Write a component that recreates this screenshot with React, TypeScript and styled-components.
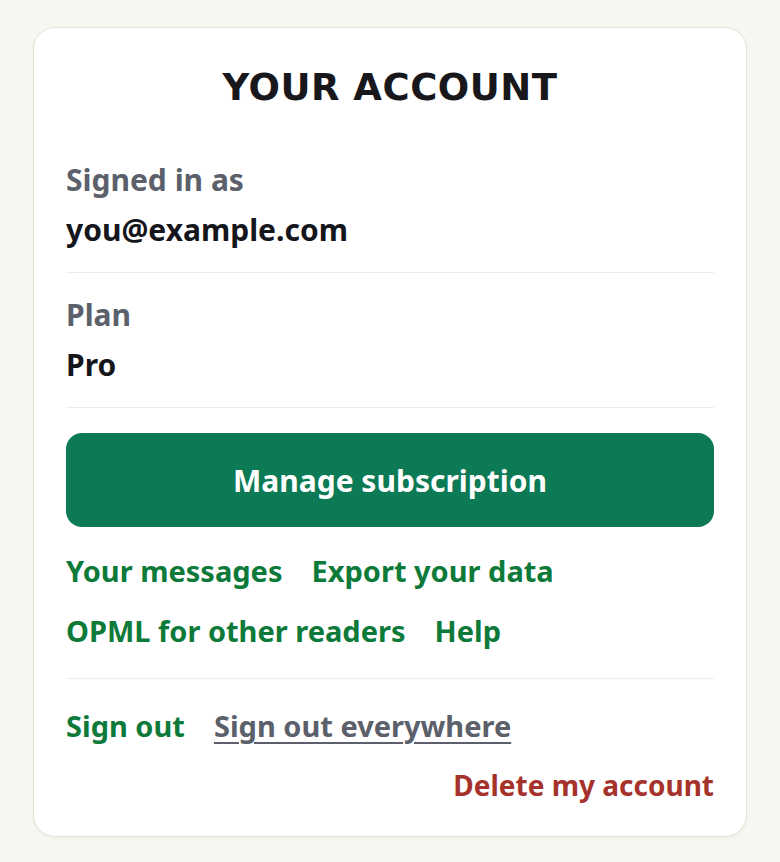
import React from "react";
import styled, { createGlobalStyle } from "styled-components";

const Global = createGlobalStyle`
  html, body { margin: 0; padding: 0; background: #f7f7f2; }
  body { font-family: "Noto Sans", "Open Sans", sans-serif; }
  * { box-sizing: border-box; }
`;

const Page = styled.div`
  padding: 27px 33px 26px;
`;

const Card = styled.section`
  background: #ffffff;
  border: 1.5px solid #e7e3d8;
  border-radius: 22px;
  box-shadow: 0 1px 3px rgba(60, 50, 20, 0.06);
  padding: 38px 32px 31px;
  display: flex;
  flex-direction: column;
`;

const Title = styled.h1`
  margin: 0 0 50px;
  font-family: "DejaVu Sans", "Liberation Sans", sans-serif;
  font-weight: 700;
  font-size: 37px;
  line-height: 44px;
  letter-spacing: 0.5px;
  text-align: center;
  color: #17171c;
`;

const Field = styled.div<{ $first?: boolean }>`
  display: flex;
  flex-direction: column;
  gap: 10px;
  padding: ${(p) => (p.$first ? "0" : "22px")} 0 22px;
  border-bottom: 1.5px solid #efede7;
`;

const Label = styled.div`
  font-size: 30px;
  line-height: 40px;
  font-weight: 700;
  color: #5b606b;
`;

const Value = styled.div`
  font-size: 30px;
  line-height: 40px;
  font-weight: 700;
  color: #15161c;
`;

const PrimaryButton = styled.button`
  margin-top: 25px;
  height: 94px;
  width: 100%;
  border: none;
  border-radius: 16px;
  background: #0c7a55;
  color: #ffffff;
  font-family: "Noto Sans", sans-serif;
  font-size: 30px;
  font-weight: 700;
  cursor: pointer;
`;

const LinkRow = styled.div<{ $top: number }>`
  display: flex;
  flex-wrap: wrap;
  gap: 29px;
  margin-top: ${(p) => p.$top}px;
`;

const Links = styled.div`
  display: flex;
  flex-direction: column;
  gap: 20px;
  margin-top: 24px;
  padding-bottom: 27px;
  border-bottom: 1.5px solid #efede7;
`;

const Link = styled.a<{ $tone?: "green" | "gray" | "red"; $size?: number }>`
  font-size: ${(p) => p.$size ?? 29}px;
  line-height: 40px;
  font-weight: 700;
  cursor: pointer;
  color: ${(p) =>
    p.$tone === "gray" ? "#5b606b" : p.$tone === "red" ? "#a6322c" : "#0d7a3a"};
  text-decoration: ${(p) => (p.$tone === "gray" ? "underline" : "none")};
  text-decoration-thickness: 2px;
  text-underline-offset: 5px;
`;

const DangerRow = styled.div`
  display: flex;
  justify-content: flex-end;
  margin-top: 19px;
`;

export default function App() {
  return (
    <>
      <Global />
      <Page>
        <Card>
          <Title>YOUR ACCOUNT</Title>
          <Field $first>
            <Label>Signed in as</Label>
            <Value>you@example.com</Value>
          </Field>
          <Field>
            <Label>Plan</Label>
            <Value>Pro</Value>
          </Field>
          <PrimaryButton>Manage subscription</PrimaryButton>
          <Links>
            <LinkRow $top={0}>
              <Link>Your messages</Link>
              <Link>Export your data</Link>
            </LinkRow>
            <LinkRow $top={0}>
              <Link>OPML for other readers</Link>
              <Link>Help</Link>
            </LinkRow>
          </Links>
          <LinkRow $top={27}>
            <Link>Sign out</Link>
            <Link $tone="gray">Sign out everywhere</Link>
          </LinkRow>
          <DangerRow>
            <Link $tone="red" $size={28}>Delete my account</Link>
          </DangerRow>
        </Card>
      </Page>
    </>
  );
}
